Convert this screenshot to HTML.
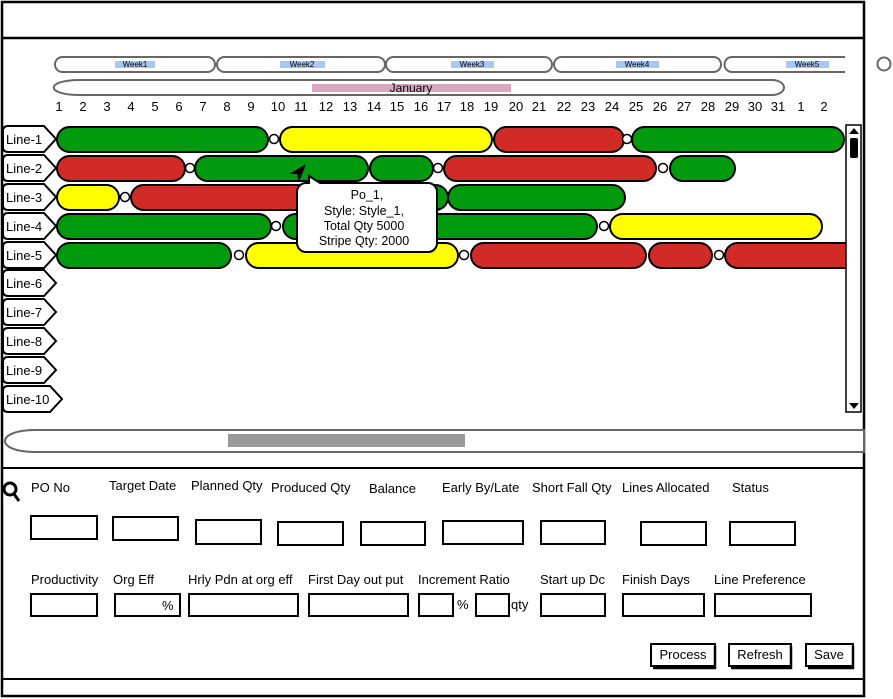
<!DOCTYPE html>
<html><head><meta charset="utf-8"><style>
html,body{margin:0;padding:0;background:#fff;}
svg{display:block;font-family:"Liberation Sans",sans-serif;}
.f{font-family:"Liberation Sans Narrow","Liberation Sans",sans-serif;font-size:13px;fill:#000}
</style></head><body>
<svg width="893" height="699" viewBox="0 0 893 699" xmlns="http://www.w3.org/2000/svg">
<rect x="2" y="2" width="862" height="694" fill="#fff" stroke="#000" stroke-width="2.5"/>
<line x1="2" y1="38" x2="864" y2="38" stroke="#000" stroke-width="2.5"/>
<line x1="2" y1="468" x2="864" y2="468" stroke="#000" stroke-width="2"/>
<line x1="2" y1="679" x2="864" y2="679" stroke="#000" stroke-width="2"/>
<circle cx="884" cy="64" r="6.5" fill="none" stroke="#666" stroke-width="2"/>
<g fill="none" stroke="#666" stroke-width="2">
<rect x="55" y="57" width="160" height="15" rx="7.5"/>
<rect x="217" y="57" width="168" height="15" rx="7.5"/>
<rect x="386" y="57" width="166" height="15" rx="7.5"/>
<rect x="554" y="57" width="167" height="15" rx="7.5"/>
<path d="M845 57 H732 a7.5 7.5 0 0 0 0 15 H845"/>
<path d="M80 80 H772 a12 7.5 0 0 1 0 15 H80 C45 95 45 80 80 80Z"/>
</g>
<g fill="#a7c7f5"><rect x="115" y="61" width="40" height="7"/><rect x="280" y="61" width="45" height="7"/><rect x="451" y="61" width="43" height="7"/><rect x="616" y="61" width="43" height="7"/><rect x="786" y="61" width="43" height="7"/></g>
<g font-size="8" text-anchor="middle" fill="#000"><text x="135" y="67">Week1</text><text x="302" y="67">Week2</text><text x="472" y="67">Week3</text><text x="637" y="67">Week4</text><text x="807" y="67">Week5</text></g>
<rect x="312" y="84" width="199" height="8" fill="#d9a7c0"/>
<text x="411" y="92" font-size="12" text-anchor="middle">January</text>
<g font-size="13" text-anchor="middle">
<text x="59" y="111">1</text><text x="83" y="111">2</text><text x="107" y="111">3</text><text x="131" y="111">4</text><text x="155" y="111">5</text><text x="179" y="111">6</text><text x="203" y="111">7</text><text x="227" y="111">8</text><text x="251" y="111">9</text><text x="278" y="111">10</text><text x="301" y="111">11</text><text x="326" y="111">12</text><text x="350" y="111">13</text><text x="374" y="111">14</text><text x="397" y="111">15</text><text x="421" y="111">16</text><text x="444" y="111">17</text><text x="467" y="111">18</text><text x="491" y="111">19</text><text x="516" y="111">20</text><text x="539" y="111">21</text><text x="564" y="111">22</text><text x="588" y="111">23</text><text x="612" y="111">24</text><text x="636" y="111">25</text><text x="660" y="111">26</text><text x="684" y="111">27</text><text x="708" y="111">28</text><text x="732" y="111">29</text><text x="755" y="111">30</text><text x="778" y="111">31</text><text x="801" y="111">1</text><text x="824" y="111">2</text>
</g>
<g fill="#fff" stroke="#000" stroke-width="2">
<path d="M8 126 H44 L56 139 L44 152 H8 Q3 152 3 147 V131 Q3 126 8 126Z"/>
<path d="M8 155 H44 L56 168 L44 181 H8 Q3 181 3 176 V160 Q3 155 8 155Z"/>
<path d="M8 184 H44 L56 197 L44 210 H8 Q3 210 3 205 V189 Q3 184 8 184Z"/>
<path d="M8 213 H44 L56 226 L44 239 H8 Q3 239 3 234 V218 Q3 213 8 213Z"/>
<path d="M8 242 H44 L56 255 L44 268 H8 Q3 268 3 263 V247 Q3 242 8 242Z"/>
<path d="M8 270 H44 L56 283 L44 296 H8 Q3 296 3 291 V275 Q3 270 8 270Z"/>
<path d="M8 299 H44 L56 312 L44 325 H8 Q3 325 3 320 V304 Q3 299 8 299Z"/>
<path d="M8 328 H44 L56 341 L44 354 H8 Q3 354 3 349 V333 Q3 328 8 328Z"/>
<path d="M8 357 H44 L56 370 L44 383 H8 Q3 383 3 378 V362 Q3 357 8 357Z"/>
<path d="M8 386 H50 L62 399 L50 412 H8 Q3 412 3 407 V391 Q3 386 8 386Z"/>
</g>
<g font-size="13"><text x="6" y="144">Line-1</text><text x="6" y="173">Line-2</text><text x="6" y="202">Line-3</text><text x="6" y="231">Line-4</text><text x="6" y="260">Line-5</text><text x="6" y="288">Line-6</text><text x="6" y="317">Line-7</text><text x="6" y="346">Line-8</text><text x="6" y="375">Line-9</text><text x="6" y="404">Line-10</text></g>
<g stroke="#000" stroke-width="2">
<rect x="57" y="127" width="211" height="25" rx="12.5" fill="#009a0e"/>
<rect x="280" y="127" width="212" height="25" rx="12.5" fill="#ffff00"/>
<rect x="494" y="127" width="130" height="25" rx="12.5" fill="#d12a27"/>
<rect x="632" y="127" width="212" height="25" rx="12.5" fill="#009a0e"/>
<rect x="57" y="156" width="128" height="25" rx="12.5" fill="#d12a27"/>
<rect x="195" y="156" width="173" height="25" rx="12.5" fill="#009a0e"/>
<rect x="370" y="156" width="63" height="25" rx="12.5" fill="#009a0e"/>
<rect x="444" y="156" width="212" height="25" rx="12.5" fill="#d12a27"/>
<rect x="670" y="156" width="65" height="25" rx="12.5" fill="#009a0e"/>
<rect x="57" y="185" width="62" height="25" rx="12.5" fill="#ffff00"/>
<rect x="131" y="185" width="200" height="25" rx="12.5" fill="#d12a27"/>
<rect x="420" y="185" width="28" height="25" rx="12.5" fill="#009a0e"/>
<rect x="448" y="185" width="177" height="25" rx="12.5" fill="#009a0e"/>
<rect x="57" y="214" width="214" height="25" rx="12.5" fill="#009a0e"/>
<rect x="283" y="214" width="314" height="25" rx="12.5" fill="#009a0e"/>
<rect x="610" y="214" width="212" height="25" rx="12.5" fill="#ffff00"/>
<rect x="57" y="243" width="174" height="25" rx="12.5" fill="#009a0e"/>
<rect x="246" y="243" width="212" height="25" rx="12.5" fill="#ffff00"/>
<rect x="471" y="243" width="175" height="25" rx="12.5" fill="#d12a27"/>
<rect x="649" y="243" width="63" height="25" rx="12.5" fill="#d12a27"/>
<rect x="725" y="243" width="135" height="25" rx="12.5" fill="#d12a27"/>
</g>
<g fill="#fff" stroke="#000" stroke-width="1.5">
<circle cx="274" cy="139" r="4.5"/><circle cx="627" cy="139" r="4.5"/><circle cx="190" cy="168" r="4.5"/><circle cx="438" cy="168" r="4.5"/><circle cx="663" cy="168" r="4.5"/><circle cx="125" cy="197" r="4.5"/><circle cx="276" cy="226" r="4.5"/><circle cx="604" cy="226" r="4.5"/><circle cx="239" cy="255" r="4.5"/><circle cx="464" cy="255" r="4.5"/><circle cx="719" cy="255" r="4.5"/>
</g>
<path d="M309 183 L309 176 L320 183 H428 a9 9 0 0 1 9 9 V243 a9 9 0 0 1 -9 9 H306 a9 9 0 0 1 -9 -9 V192 a9 9 0 0 1 9 -9Z" fill="#fff" stroke="#000" stroke-width="2"/>
<g font-size="12.5" text-anchor="middle"><text x="367" y="199">Po_1,</text><text x="364" y="215">Style: Style_1,</text><text x="364" y="230">Total Qty 5000</text><text x="364" y="245">Stripe Qty: 2000</text></g>
<path d="M306 164 L289 174 L297 174 L299 182Z" fill="#000"/>
<rect x="846" y="125" width="15" height="287" fill="#fff" stroke="#000" stroke-width="1.5"/>
<path d="M849 134 L854 128 L859 134Z"/><path d="M849 403 L854 409 L859 403Z"/>
<rect x="850" y="138" width="8" height="20" rx="2"/>
<path d="M35 430 H864 V452 H35 C-5 452 -5 430 35 430Z" fill="#fff" stroke="#666" stroke-width="2"/>
<rect x="228" y="434" width="237" height="13" fill="#999"/>
<circle cx="10" cy="489" r="6" fill="none" stroke="#000" stroke-width="3"/><line x1="14" y1="494" x2="19" y2="501" stroke="#000" stroke-width="3"/>
<g fill="#fff" stroke="#000" stroke-width="2">
<rect x="31" y="516" width="66" height="23"/><rect x="113" y="517" width="65" height="23"/><rect x="196" y="520" width="65" height="24"/><rect x="278" y="522" width="65" height="23"/><rect x="361" y="522" width="64" height="23"/><rect x="443" y="521" width="80" height="23"/><rect x="541" y="521" width="64" height="23"/><rect x="641" y="522" width="65" height="23"/><rect x="730" y="522" width="65" height="23"/>
<rect x="31" y="594" width="66" height="22"/><rect x="115" y="594" width="65" height="22"/><rect x="189" y="594" width="109" height="22"/><rect x="309" y="594" width="99" height="22"/><rect x="419" y="594" width="34" height="22"/><rect x="476" y="594" width="33" height="22"/><rect x="541" y="594" width="64" height="22"/><rect x="623" y="594" width="81" height="22"/><rect x="715" y="594" width="96" height="22"/>
</g>
<g class="f">
<text x="31" y="492" class="f">PO No</text><text x="109" y="490" class="f">Target Date</text><text x="191" y="490" class="f">Planned Qty</text><text x="271" y="492" class="f">Produced Qty</text><text x="369" y="493" class="f">Balance</text><text x="442" y="492" class="f">Early By/Late</text><text x="532" y="492" class="f">Short Fall Qty</text><text x="622" y="492" class="f">Lines Allocated</text><text x="732" y="492" class="f">Status</text>
<text x="31" y="584" class="f">Productivity</text><text x="113" y="584" class="f">Org Eff</text><text x="188" y="584" class="f">Hrly Pdn at org eff</text><text x="308" y="584" class="f">First Day out put</text><text x="418" y="584" class="f">Increment Ratio</text><text x="540" y="584" class="f">Start up Dc</text><text x="622" y="584" class="f">Finish Days</text><text x="714" y="584" class="f">Line Preference</text>
<text x="162" y="610" class="f">%</text><text x="457" y="609" class="f">%</text><text x="511" y="609" class="f">qty</text>
</g>
<g stroke="#000" stroke-width="2"><rect x="651" y="644" width="64" height="22" fill="#fff"/><rect x="729" y="644" width="62" height="22" fill="#fff"/><rect x="806" y="644" width="47" height="22" fill="#fff"/></g>
<path d="M715 646 V668 H653" fill="none" stroke="#000" stroke-width="2.5"/><path d="M791 646 V668 H731" fill="none" stroke="#000" stroke-width="2.5"/><path d="M853 646 V668 H808" fill="none" stroke="#000" stroke-width="2.5"/>
<g class="f" text-anchor="middle"><text x="683" y="659" class="f">Process</text><text x="760" y="659" class="f">Refresh</text><text x="829" y="659" class="f">Save</text></g>
</svg>
</body></html>
